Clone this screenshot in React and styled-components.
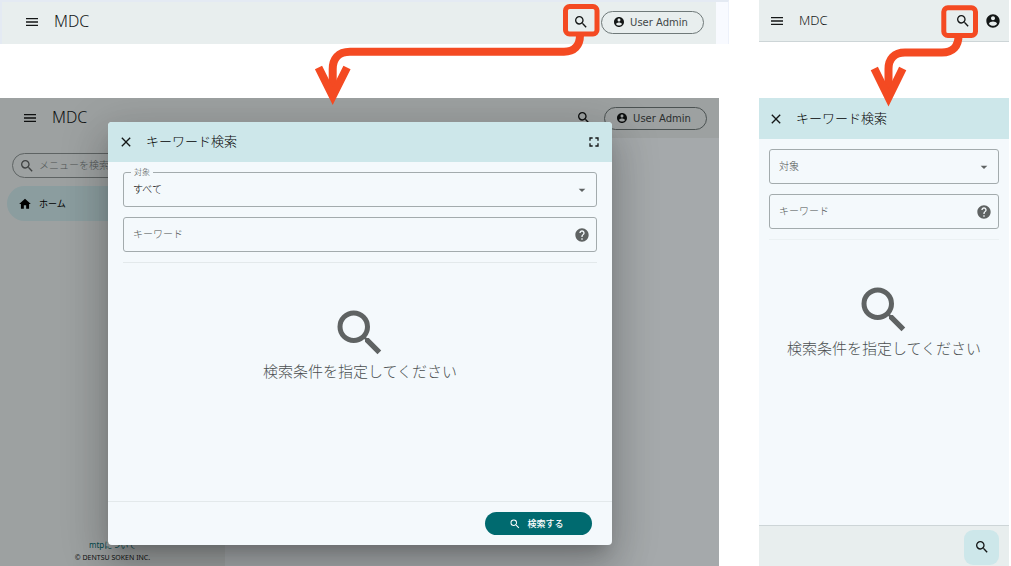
import React from "react";
import styled, { createGlobalStyle } from "styled-components";
import {
  MdMenu,
  MdSearch,
  MdClose,
  MdFullscreen,
  MdHelp,
  MdArrowDropDown,
  MdHome,
} from "react-icons/md";

const color = {
  bar: "#e8eeee",
  surface: "#f4f9fc",
  accent: "#cde7ea",
  primary: "#006a6f",
  ink: "#141717",
  muted: "#5f6363",
  mutedText: "#4a4f4f",
  outline: "#a3abad",
  line: "#e3e9eb",
  mark: "#f44a22",
};

const GlobalStyle = createGlobalStyle`
  *, *::before, *::after { box-sizing: border-box; }
  body {
    margin: 0;
    background: #fff;
    color: ${color.ink};
    font-family: "Noto Sans", "Noto Sans CJK JP", sans-serif;
    font-size: 10px;
    font-weight: 300;
  }
  button, input, select { font: inherit; color: inherit; }
  svg { display: block; flex: none; }
`;

const Page = styled.main`
  display: grid;
  grid-template-columns: minmax(0, 729fr) minmax(0, 250fr);
  column-gap: 30px;
  min-height: 100vh;
  padding-right: 2px;
`;

const Column = styled.div`
  position: relative;
  display: grid;
  grid-template-rows: 44px 1fr;
  row-gap: 54px;
`;

const Strip = styled.div`
  display: flex;
  background: #f8faff;
  border-top: 2px solid #e4eaf3;
  border-left: 2px solid #e4eaf3;
  border-right: 1px solid #edf1fa;
`;

const StripTail = styled.div`
  width: 12px;
`;

const Bar = styled.header`
  flex: 1;
  display: flex;
  align-items: center;
  gap: 14px;
  height: ${(p) => (p.$compact ? "42px" : "40px")};
  padding: ${(p) => (p.$compact ? "0 8px 0 10px" : "0 12px 0 22px")};
  background: ${color.bar};
  border-bottom: ${(p) => (p.$compact ? "1px solid #cdd5d7" : "0")};
`;

const StripBar = styled(Bar)`
  height: auto;
  padding-bottom: 2px;
`;

const Brand = styled.h1`
  flex: 1;
  margin: 0;
  padding-bottom: 2px;
  font-size: ${(p) => (p.$compact ? "13px" : "16px")};
  font-weight: 300;
  line-height: 20px;
`;

const Actions = styled.div`
  display: flex;
  align-items: center;
  gap: 12px;
`;

const IconButton = styled.button`
  display: grid;
  place-items: center;
  width: 16px;
  height: 16px;
  padding: 0;
  border: 0;
  background: none;
  color: ${(p) => (p.$muted ? color.muted : color.ink)};
`;

const UserButton = styled.button`
  display: flex;
  align-items: center;
  justify-content: center;
  gap: 5px;
  width: 103px;
  height: 23px;
  padding: 0 4px 0 0;
  border: 1px solid #6f7979;
  border-radius: 12px;
  background: none;
  font-family: "DejaVu Sans", sans-serif;
  font-weight: 400;
  color: #3f4646;
  svg { color: ${color.ink}; }
`;

const Desktop = styled.section`
  position: relative;
  display: flex;
  flex-direction: column;
  margin-right: 10px;
  background: ${color.surface};
  overflow: hidden;
`;

const DesktopBar = styled(Bar)`
  flex: none;
`;

const Sidebar = styled.aside`
  flex: 1;
  display: flex;
  flex-direction: column;
  width: 225px;
  padding-top: 15px;
  background: ${color.bar};
`;

const MenuSearch = styled.label`
  display: flex;
  align-items: center;
  gap: 4px;
  height: 25px;
  margin: 0 12px;
  padding: 0 6px;
  border: 1px solid #8b9393;
  border-radius: 13px;
  color: ${color.muted};
`;

const MenuSearchInput = styled.input`
  flex: 1;
  min-width: 0;
  padding: 0 0 2px;
  border: 0;
  outline: 0;
  background: none;
  &::placeholder { color: #767c7c; opacity: 1; }
`;

const NavItem = styled.a`
  display: flex;
  align-items: center;
  gap: 7px;
  height: 35px;
  margin: 8px 7px 0;
  padding: 0 11px;
  border-radius: 18px;
  background: ${color.accent};
  color: #000;
  font-size: 9px;
  font-weight: 400;
  text-decoration: none;
`;

const SideFooter = styled.footer`
  display: flex;
  flex-direction: column;
  align-items: center;
  margin-top: auto;
  padding-bottom: 2px;
  font-size: 7px;
  font-weight: 400;
  line-height: 12px;
`;

const AboutLink = styled.a`
  color: ${color.primary};
  font-size: 8px;
  line-height: 14px;
  text-decoration: none;
`;

const Backdrop = styled.div`
  position: absolute;
  inset: 0;
  display: flex;
  padding: 24px 107px 21px 108px;
  background: rgba(0, 0, 0, 0.32);
`;

const Dialog = styled.div`
  flex: 1;
  display: flex;
  flex-direction: column;
  border-radius: 4px;
  overflow: hidden;
  background: ${color.surface};
  box-shadow: 0 11px 15px -7px rgba(0, 0, 0, 0.2),
    0 24px 38px 3px rgba(0, 0, 0, 0.14), 0 9px 46px 8px rgba(0, 0, 0, 0.12);
`;

const Mobile = styled.section`
  display: flex;
  flex-direction: column;
  background: ${color.surface};
`;

const DialogBar = styled.header`
  display: flex;
  align-items: center;
  gap: 12px;
  height: ${(p) => (p.$compact ? "41px" : "40px")};
  padding: 0 ${(p) => (p.$compact ? "9px" : "10px")};
  background: ${color.accent};
`;

const DialogTitle = styled.h2`
  flex: 1;
  margin: 0;
  padding-bottom: 2px;
  color: #000;
  font-size: 13px;
  font-weight: 300;
  line-height: 20px;
`;

const DialogBody = styled.div`
  flex: 1;
  display: flex;
  flex-direction: column;
  gap: 10px;
  padding: 10px ${(p) => (p.$compact ? "10px" : "15px")};
`;

const Field = styled.div`
  position: relative;
  display: flex;
  align-items: center;
  height: 35px;
  padding-right: 6px;
  border: 1px solid ${color.outline};
  border-radius: 3px;
  color: ${color.muted};
`;

const FieldLabel = styled.label`
  position: absolute;
  top: -7px;
  left: 7px;
  padding: 0 3px;
  background: ${color.surface};
  color: ${color.mutedText};
  font-size: 8px;
  line-height: 12px;
`;

const Select = styled.select`
  flex: 1;
  min-width: 0;
  height: 33px;
  padding: 0 0 2px 9px;
  border: 0;
  outline: 0;
  appearance: none;
  background: none;
  color: ${(p) => (p.$filled ? "#000" : color.mutedText)};
`;

const TextInput = styled.input`
  flex: 1;
  min-width: 0;
  height: 33px;
  padding: 0 0 2px 9px;
  border: 0;
  outline: 0;
  background: none;
  &::placeholder { color: ${color.mutedText}; opacity: 1; }
`;

const Rule = styled.hr`
  width: 100%;
  margin: 0;
  border: 0;
  border-top: 1px solid ${(p) => (p.$compact ? "#ebf1f3" : color.line)};
`;

const Empty = styled.div`
  display: flex;
  flex-direction: column;
  align-items: center;
  padding-top: 30px;
  color: ${color.muted};
`;

const EmptyText = styled.p`
  margin: 0;
  color: ${color.mutedText};
  font-size: 15px;
  line-height: 16px;
  white-space: nowrap;
`;

const DialogFooter = styled.footer`
  display: flex;
  align-items: center;
  justify-content: flex-end;
  height: ${(p) => (p.$compact ? "41px" : "44px")};
  padding: ${(p) => (p.$compact ? "2px 10px 0" : "0 20px")};
  background: ${(p) => (p.$compact ? color.bar : "none")};
  border-top: 1px solid ${(p) => (p.$compact ? "#cdd5d7" : color.line)};
`;

const SubmitButton = styled.button`
  display: flex;
  align-items: center;
  justify-content: center;
  gap: 6px;
  width: 107px;
  height: 23px;
  padding: 0 4px 0 0;
  border: 0;
  border-radius: 12px;
  background: ${color.primary};
  color: #fff;
  font-size: 9px;
  font-weight: 500;
`;

const Fab = styled.button`
  display: grid;
  place-items: center;
  width: 35px;
  height: 35px;
  padding: 0;
  border: 0;
  border-radius: 9px;
  background: ${color.accent};
  color: ${color.ink};
`;

const Callout = styled.svg`
  position: absolute;
  top: 0;
  right: ${(p) => p.$right};
  pointer-events: none;
`;

function AccountIcon({ size }) {
  return (
    <svg width={size} height={size} viewBox="0 0 24 24" fill="currentColor" aria-hidden="true">
      <path d="M12 2C6.48 2 2 6.48 2 12s4.480 10 10 10 10-4.480 10-10S17.520 2 12 2zm0 3c1.660 0 3 1.340 3 3s-1.340 3-3 3-3-1.340-3-3 1.340-3 3-3zm0 14.200c-2.500 0-4.710-1.280-6-3.220.030-1.990 4-3.080 6-3.080 1.990 0 5.970 1.090 6 3.080-1.290 1.940-3.500 3.220-6 3.220z" />
    </svg>
  );
}

function BarContent() {
  return (
    <>
      <IconButton type="button" aria-label="メニュー"><MdMenu size={16} /></IconButton>
      <Brand>MDC</Brand>
      <Actions>
        <IconButton type="button" aria-label="検索"><MdSearch size={16} /></IconButton>
        <UserButton type="button">
          <AccountIcon size={12} />
          User Admin
        </UserButton>
      </Actions>
    </>
  );
}

function SearchForm({ id, compact }) {
  return (
    <DialogBody $compact={compact}>
      <Field>
        {!compact && <FieldLabel htmlFor={`${id}-target`}>対象</FieldLabel>}
        <Select id={`${id}-target`} aria-label="対象" $filled={!compact}>
          <option>{compact ? "対象" : "すべて"}</option>
        </Select>
        <MdArrowDropDown size={16} />
      </Field>
      <Field>
        <TextInput type="text" aria-label="キーワード" placeholder="キーワード" />
        <IconButton type="button" aria-label="ヘルプ" $muted><MdHelp size={16} /></IconButton>
      </Field>
      <Rule $compact={compact} />
      <Empty>
        <MdSearch size={60} />
        <EmptyText>検索条件を指定してください</EmptyText>
      </Empty>
    </DialogBody>
  );
}

export default function App() {
  return (
    <>
      <GlobalStyle />
      <Page>
        <Column>
          <Strip>
            <StripBar><BarContent /></StripBar>
            <StripTail />
          </Strip>
          <Desktop>
            <DesktopBar><BarContent /></DesktopBar>
            <Sidebar>
              <MenuSearch>
                <MdSearch size={16} />
                <MenuSearchInput type="text" placeholder="メニューを検索" />
              </MenuSearch>
              <NavItem href="#home">
                <MdHome size={14} />
                ホーム
              </NavItem>
              <SideFooter>
                <AboutLink href="#about">mtpについて</AboutLink>
                <span>© DENTSU SOKEN INC.</span>
              </SideFooter>
            </Sidebar>
            <Backdrop>
              <Dialog role="dialog" aria-label="キーワード検索">
                <DialogBar>
                  <IconButton type="button" aria-label="閉じる"><MdClose size={16} /></IconButton>
                  <DialogTitle>キーワード検索</DialogTitle>
                  <IconButton type="button" aria-label="全画面"><MdFullscreen size={16} /></IconButton>
                </DialogBar>
                <SearchForm id="desktop" />
                <DialogFooter>
                  <SubmitButton type="button">
                    <MdSearch size={12} />
                    検索する
                  </SubmitButton>
                </DialogFooter>
              </Dialog>
            </Backdrop>
          </Desktop>
          <Callout $right="129px" width="290" height="108" viewBox="310 0 290 108" fill="none" stroke={color.mark}>
            <rect x="565.5" y="6.5" width="31.5" height="27.5" rx="4" strokeWidth="5" />
            <path d="M580 35C580 46 574 51.7 564 51.7H350C338 51.7 332.7 59 332.7 69V94" strokeWidth="8" />
            <path d="M318.5 67.5L332.7 96L347 67.5" strokeWidth="8" />
          </Callout>
        </Column>
        <Column>
          <Bar $compact>
            <IconButton type="button" aria-label="メニュー"><MdMenu size={16} /></IconButton>
            <Brand $compact>MDC</Brand>
            <IconButton type="button" aria-label="検索"><MdSearch size={16} /></IconButton>
            <IconButton type="button" aria-label="ユーザー"><AccountIcon size={16} /></IconButton>
          </Bar>
          <Mobile>
            <DialogBar $compact>
              <IconButton type="button" aria-label="閉じる"><MdClose size={16} /></IconButton>
              <DialogTitle>キーワード検索</DialogTitle>
            </DialogBar>
            <SearchForm id="mobile" compact />
            <DialogFooter $compact>
              <Fab type="button" aria-label="検索"><MdSearch size={16} /></Fab>
            </DialogFooter>
          </Mobile>
          <Callout $right="30px" width="111" height="108" viewBox="868 0 111 108" fill="none" stroke={color.mark}>
            <rect x="943.8" y="7.8" width="31.7" height="27.7" rx="4" strokeWidth="5" />
            <path d="M958.5 36C958.5 46 953 52.5 942 52.5H905C894 52.5 888.5 59 888.5 69V94" strokeWidth="8" />
            <path d="M874.3 68.5L888.5 97.5L902.7 68.5" strokeWidth="8" />
          </Callout>
        </Column>
      </Page>
    </>
  );
}
